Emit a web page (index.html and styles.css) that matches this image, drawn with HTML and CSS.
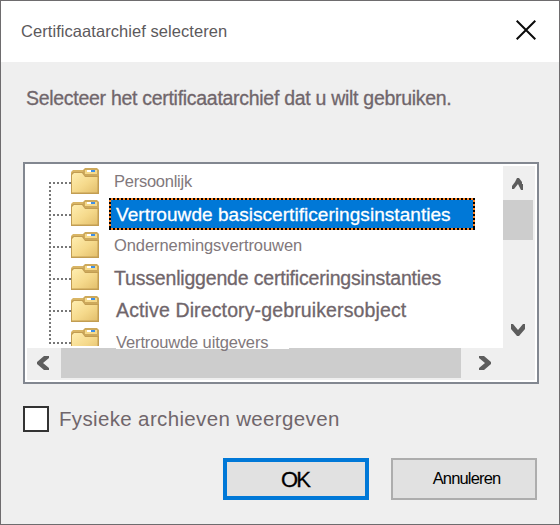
FILE: index.html
```
<!DOCTYPE html>
<html lang="nl">
<head>
<meta charset="utf-8">
<title>Certificaatarchief selecteren</title>
<link rel="stylesheet" href="styles.css">
</head>
<body>
<svg width="0" height="0" class="defs">
  <defs>
    <linearGradient id="front" x1="0" y1="0" x2="1" y2="1">
      <stop offset="0" stop-color="#ffeeb0"/><stop offset=".55" stop-color="#f5d98b"/><stop offset="1" stop-color="#e3bf6c"/>
    </linearGradient>
    <symbol id="folder" viewBox="0 0 28 26">
      <path d="M0 4L2 2H12L14 4H26V24H0Z" fill="#d9b565"/>
      <path d="M12 2L14 0H26L28 2V8H14L12 6Z" fill="#cda95c"/>
      <path d="M14 2H26V6H14Z" fill="#f5d98a"/>
      <path d="M16 2H20V4H16Z" fill="#fff"/>
      <path d="M20 2H24V4H20Z" fill="#3e8fe5"/>
      <path d="M0 6L2 4H12L14 8H28V26H0Z" fill="#c29d52"/>
      <path d="M1 7L3 5H11L14 9H26.500V24.500H1Z" fill="url(#front)"/>
    </symbol>
  </defs>
</svg>
<div class="dialog">
  <header class="titlebar">
    <h1 class="title">Certificaatarchief selecteren</h1>
    <svg class="close" width="20" height="20" viewBox="0 0 20 20"><path d="M.7.7L19.300 19.300M19.300.7L.7 19.300"/></svg>
  </header>
  <main class="content">
    <p class="message">Selecteer het certificaatarchief dat u wilt gebruiken.</p>
    <div class="listbox">
      <div class="view">
        <ul class="tree">
          <li class="row first"><span class="branch"></span><svg class="folder"><use href="#folder"/></svg><span class="label t1">Persoonlijk</span></li>
          <li class="row"><span class="branch"></span><svg class="folder"><use href="#folder"/></svg><span class="label selected t2">Vertrouwde basiscertificeringsinstanties</span></li>
          <li class="row"><span class="branch"></span><svg class="folder"><use href="#folder"/></svg><span class="label t3">Ondernemingsvertrouwen</span></li>
          <li class="row"><span class="branch"></span><svg class="folder"><use href="#folder"/></svg><span class="label large t4">Tussenliggende certificeringsinstanties</span></li>
          <li class="row"><span class="branch"></span><svg class="folder"><use href="#folder"/></svg><span class="label large t5">Active Directory-gebruikersobject</span></li>
          <li class="row last"><span class="branch"></span><svg class="folder" viewBox="0 0 28 18"><use href="#folder" width="28" height="26"/></svg><span class="label t6">Vertrouwde uitgevers</span></li>
        </ul>
        <div class="vscroll">
          <svg class="arrow-up" width="12" height="12" viewBox="0 0 12 12"><path d="M5 0H7L10 4V6H11V12H9L6 6L2 11H0V8L3 4Z"/></svg>
          <div class="vthumb"></div>
          <svg class="arrow-down" width="14" height="12" viewBox="0 0 14 12"><path d="M0 0H2L7 6L12 0H14V5L8 12H6L0 5Z"/></svg>
        </div>
      </div>
      <div class="hscroll">
        <svg class="arrow-left" width="12" height="14" viewBox="0 0 12 14"><path d="M12 0V2L6 7L12 12V14H7L0 8V6L7 0Z"/></svg>
        <div class="hthumb"></div>
        <svg class="arrow-right" width="12" height="14" viewBox="0 0 12 14"><path d="M0 0V2L6 7L0 12V14H5L12 8V6L5 0Z"/></svg>
      </div>
    </div>
    <label class="check"><span class="box"></span><span class="check-text">Fysieke archieven weergeven</span></label>
    <div class="buttons">
      <button class="btn ok"><span>OK</span></button>
      <button class="btn cancel"><span>Annuleren</span></button>
    </div>
  </main>
</div>
</body>
</html>
```

FILE: styles.css
```
* { box-sizing: border-box; }
body { margin: 0; font-family: "Liberation Sans", Arial, sans-serif; color: #70666b; }
.defs { display: block; }
.dialog { width: 560px; height: 525px; border: 1px solid #6e6c6e; background: #efefef; overflow: hidden; }
.titlebar { height: 61px; background: #fff; display: flex; justify-content: space-between; padding: 19px 23px 0 20px; }
.title { margin: -1px 0 0; font-size: 16.500px; line-height: 24px; font-weight: 400; color: #5c595c; white-space: nowrap; letter-spacing: .06px; }
.close { stroke: #0b0b0b; stroke-width: 2; fill: none; }
.content { padding: 0 22px; display: flex; flex-direction: column; }
.message { margin: 23px 0 0 3px; height: 77px; font-size: 19.500px; line-height: 26px; white-space: nowrap; letter-spacing: -.29px; -webkit-text-stroke: .3px; }
.listbox { width: 516px; height: 222px; border: 2px solid #828790; background: #fff; padding: 2px; }
.view { display: flex; height: 182px; position: relative; z-index: 1; }
.tree { list-style: none; margin: 0; padding: 0 0 0 22px; width: 476px; height: 182px; }
.row { display: flex; height: 32px; }
.branch { width: 22px; height: 32px; flex: none; background: repeating-linear-gradient(90deg, #777 0 2px, transparent 2px 4px) 0 16px / 22px 2px no-repeat, repeating-linear-gradient(180deg, #777 0 2px, transparent 2px 4px) 0 0 / 2px 32px no-repeat; }
.first .branch { background-size: 22px 2px, 2px 16px; background-position: 0 16px, 0 16px; }
.last .branch { height: 20px; background-size: 22px 2px, 2px 16px; }
.folder { width: 28px; height: 26px; margin-top: 2px; flex: none; }
.last .folder { height: 18px; }
.label { line-height: 30px; font-size: 16.500px; margin-left: 15px; white-space: nowrap; color: #81787c; }
.large { font-size: 19.500px; line-height: 32px; color: #70666b; -webkit-text-stroke: .3px; }
.t1 { letter-spacing: -.25px; }
.t3 { letter-spacing: -.08px; }
.t4 { letter-spacing: -.18px; }
.t5 { margin-left: 17px; letter-spacing: .13px; }
.t6 { height: 16px; margin: 7px 0 0 17px; width: 173px; line-height: 18px; background: #fff; letter-spacing: -.13px; }
.selected { width: 366px; height: 32px; margin-left: 10px; padding: 3px 0 0 7px; line-height: 28px; font-size: 19px; letter-spacing: .05px; color: #fff; -webkit-text-stroke: .3px;
  background: repeating-linear-gradient(90deg, #000 0 2px, #ff8728 2px 4px) 0 0 / 100% 2px no-repeat, repeating-linear-gradient(90deg, #000 0 2px, #ff8728 2px 4px) 0 100% / 100% 2px no-repeat, repeating-linear-gradient(180deg, #000 0 2px, #ff8728 2px 4px) 0 0 / 2px 100% no-repeat, repeating-linear-gradient(180deg, #000 0 2px, #ff8728 2px 4px) 100% 0 / 2px 100% no-repeat, #0078d7; }
.vscroll { width: 32px; height: 182px; background: #efefef; display: flex; flex-direction: column; }
.arrow-up { margin: 12px 0 10px 9px; flex: none; }
.vthumb { width: 30px; height: 40px; background: #cdcdcd; }
.arrow-down { margin: 84px 0 0 8px; flex: none; }
.hscroll { width: 508px; height: 32px; background: #efefef; display: flex; }
.arrow-left { margin: 8px 12px 0 10px; flex: none; }
.hthumb { width: 400px; height: 30px; background: #cdcdcd; }
.arrow-right { margin: 8px 0 0 18px; flex: none; }
.arrow-up, .arrow-down, .arrow-left, .arrow-right { fill: #5d5d5d; }
.check { display: flex; margin-top: 22px; height: 26px; }
.box { width: 26px; height: 26px; border: 2px solid #333; background: #fff; }
.check-text { margin-left: 10px; font-size: 20.500px; line-height: 26px; white-space: nowrap; letter-spacing: .35px; }
.buttons { display: flex; gap: 22px; margin: 26px 0 0 200px; }
.btn { width: 146px; height: 42px; padding: 0; background: #e1e1e1; font-family: inherit; color: #000; }
.ok { border: 4px solid #0078d7; font-size: 22px; letter-spacing: -2px; padding: 2px 2px 0 0; -webkit-text-stroke: .3px; }
.cancel { border: 2px solid #adadad; font-size: 16.500px; letter-spacing: -.85px; padding: 0 0 2px 5px; }
```
